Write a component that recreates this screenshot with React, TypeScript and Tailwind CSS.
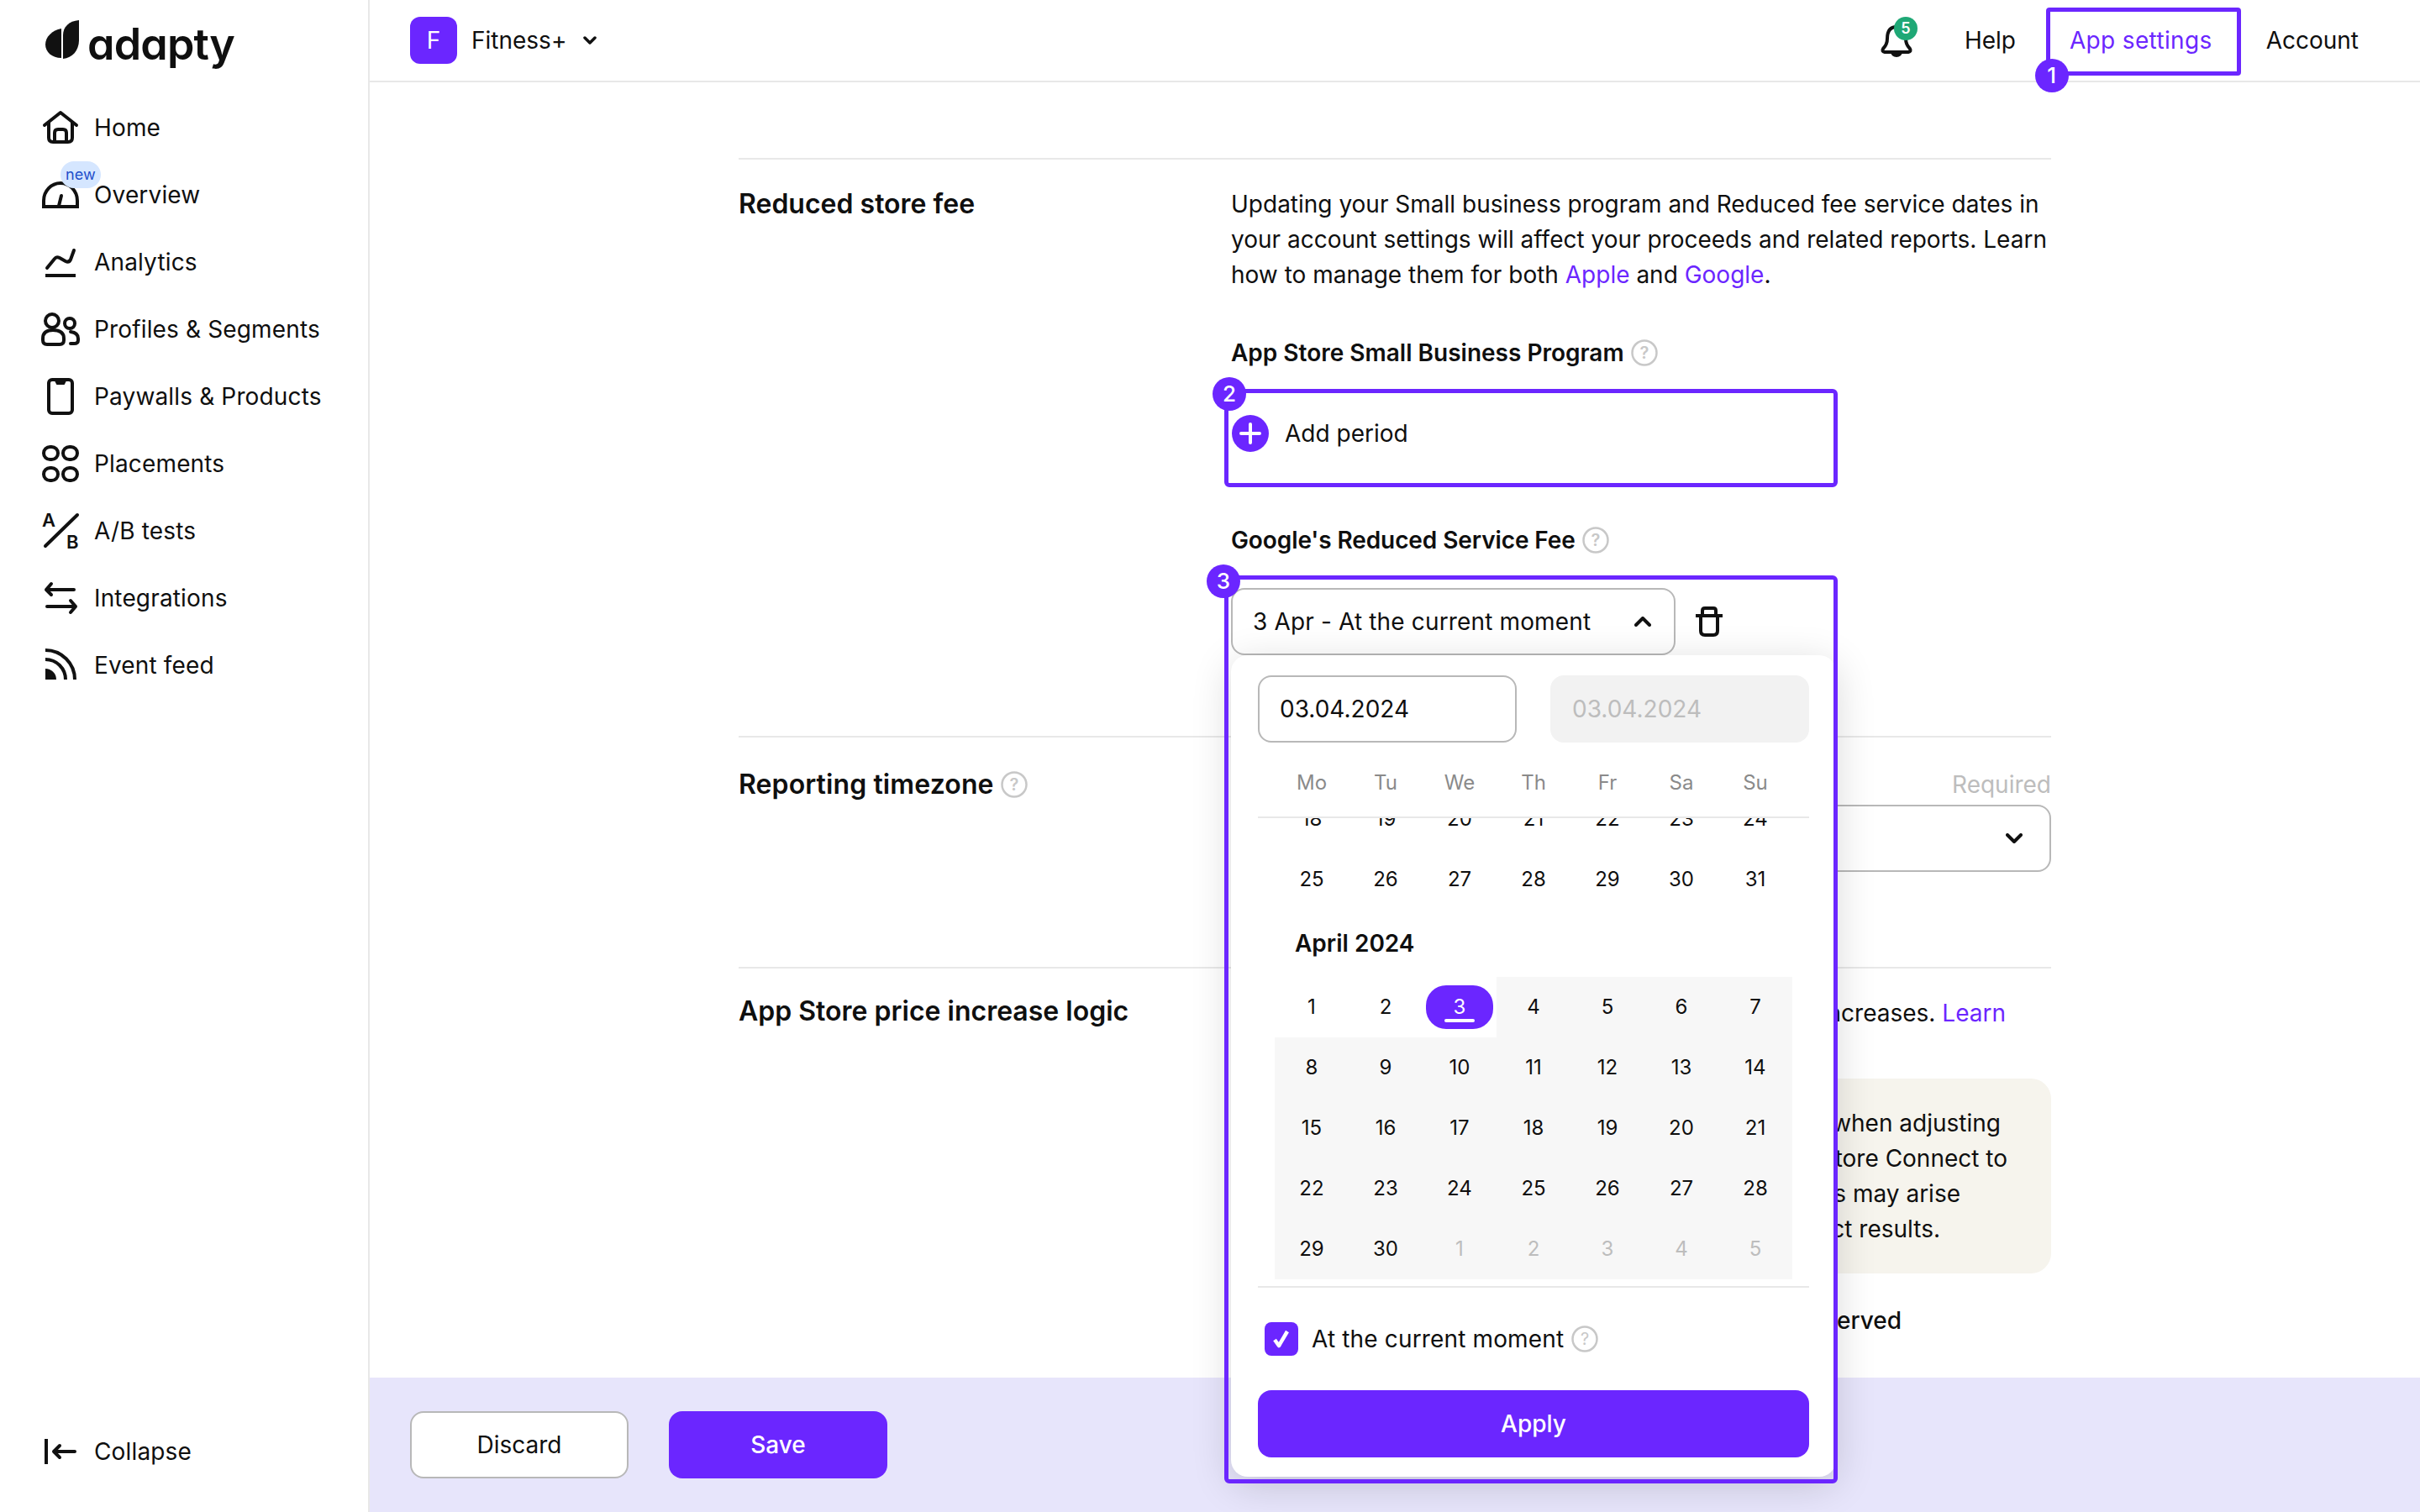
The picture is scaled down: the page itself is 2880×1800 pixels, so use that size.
import React from "react";

function NavIcon({ name }: { name: string }) {
  const c = { fill: "none", stroke: "#111", strokeWidth: 4, strokeLinecap: "round" as const, strokeLinejoin: "round" as const };
  return (
    <svg width="48" height="48" viewBox="0 0 48 48" className="shrink-0">
      {name === "home" && (
        <g {...c}>
          <path d="M5 21 L24 6 L43 21" />
          <path d="M10 18 V36 Q10 41 15 41 H33 Q38 41 38 36 V18" />
          <path d="M17 41 V30 Q17 26 21 26 H27 Q31 26 31 30 V41" />
        </g>
      )}
      {name === "overview" && (
        <g {...c}>
          <path d="M4 38 V31 A20 21 0 0 1 44 31 V38 Z" strokeLinecap="butt" strokeLinejoin="miter" />
          <path d="M22 37 L25 25" />
        </g>
      )}
      {name === "analytics" && (
        <g {...c}>
          <path d="M8 31 L17 20 Q19 17 23 19 L30 23 Q34 25 36 21 L40 10" />
          <path d="M6 40 H42" strokeLinecap="butt" />
        </g>
      )}
      {name === "profiles" && (
        <g {...c}>
          <circle cx="14" cy="14" r="8" />
          <path d="M3 35 Q3 25 15 25 Q28 25 28 35 V37 Q28 42 23 42 H8 Q3 42 3 37 Z" />
          <circle cx="35" cy="17" r="6" />
          <path d="M36 27 Q45 28 45 35 V37 Q45 41 40 41 H36" />
        </g>
      )}
      {name === "paywalls" && (
        <g {...c}>
          <rect x="10" y="4" width="28" height="40" rx="4" />
          <path d="M18 5 L20 9 H28 L30 5" fill="#111" strokeWidth="2" />
        </g>
      )}
      {name === "placements" && (
        <g {...c}>
          <rect x="4" y="4" width="17" height="15" rx="7.5" />
          <rect x="27" y="4" width="17" height="15" rx="7.5" />
          <rect x="4" y="29" width="17" height="15" rx="7.5" />
          <rect x="27" y="29" width="17" height="15" rx="7.5" />
        </g>
      )}
      {name === "ab" && (
        <g>
          <path d="M44 5 L6 42" {...c} />
          <text x="2" y="19" fontSize="22" fontWeight="600" fill="#111" fontFamily="Inter, sans-serif">A</text>
          <text x="31" y="45" fontSize="22" fontWeight="600" fill="#111" fontFamily="Inter, sans-serif">B</text>
        </g>
      )}
      {name === "integrations" && (
        <g {...c}>
          <path d="M7 14 H40 M13 7 L7 14 L13 20" />
          <path d="M8 34 H42 M36 27 L42 34 L36 41" />
        </g>
      )}
      {name === "feed" && (
        <g>
          <path d="M6 28 A13 13 0 0 1 19 41 H6 Z" fill="#111" />
          <path d="M6 17 A24 24 0 0 1 30 41 M6 6 A35 35 0 0 1 41 41" {...c} strokeLinecap="butt" />
        </g>
      )}
      {name === "collapse" && (
        <g {...c}>
          <path d="M7 9 V39" strokeLinecap="butt" />
          <path d="M41 24 H16 M23 17 L16 24 L23 31" />
        </g>
      )}
    </svg>
  );
}

function Help() {
  return (
    <svg width="32" height="32" viewBox="0 0 32 32" className="shrink-0">
      <circle cx="16" cy="16" r="14.5" fill="none" stroke="#c8c8c8" strokeWidth="2.5" />
      <text x="16" y="23" textAnchor="middle" fontSize="20" fill="#c8c8c8" fontFamily="Inter, sans-serif">?</text>
    </svg>
  );
}

function Chevron({ w = 14, up = false, sw = 3.5 }: { w?: number; up?: boolean; sw?: number }) {
  const h = Math.round(w * 0.6);
  return (
    <svg width={w} height={h} viewBox={`0 0 ${w} ${h}`} className="shrink-0">
      <path
        d={up ? `M2 ${h - 2} L${w / 2} 2 L${w - 2} ${h - 2}` : `M2 2 L${w / 2} ${h - 2} L${w - 2} 2`}
        fill="none"
        stroke="#111"
        strokeWidth={sw}
        strokeLinecap="round"
        strokeLinejoin="round"
      />
    </svg>
  );
}

function Badge({ n, className }: { n: number; className: string }) {
  return (
    <div className={`absolute w-10 h-10 rounded-full bg-[#6b26ff] text-white text-[26px] font-medium flex items-center justify-center ${className}`}>
      {n}
    </div>
  );
}

const nav = [
  ["home", "Home"],
  ["overview", "Overview"],
  ["analytics", "Analytics"],
  ["profiles", "Profiles & Segments"],
  ["paywalls", "Paywalls & Products"],
  ["placements", "Placements"],
  ["ab", "A/B tests"],
  ["integrations", "Integrations"],
  ["feed", "Event feed"],
];

const weekdays = ["Mo", "Tu", "We", "Th", "Fr", "Sa", "Su"];
const march = [25, 26, 27, 28, 29, 30, 31];
const marchPrev = [18, 19, 20, 21, 22, 23, 24];
const april = [
  1, 2, 3, 4, 5, 6, 7, 8, 9, 10, 11, 12, 13, 14, 15, 16, 17, 18, 19, 20, 21, 22, 23, 24, 25, 26, 27, 28, 29, 30,
];
const may = [1, 2, 3, 4, 5];

function Calendar() {
  return (
    <div className="absolute left-0 top-[80px] w-[720px] h-[978px] bg-white rounded-[20px] shadow-[0_10px_48px_rgba(0,0,0,0.16)] z-10 px-8 pt-6 flex flex-col">
      <div className="flex gap-10">
        <div className="w-[308px] h-[80px] rounded-2xl border-2 border-[#b8b8b8] flex items-center pl-[24px]">03.04.2024</div>
        <div className="w-[308px] h-[80px] rounded-2xl bg-[#f2f2f2] text-[#bdbdbd] flex items-center pl-[26px]">03.04.2024</div>
      </div>
      <div className="h-[90px] border-b-2 border-[#e8e8e8] px-5 grid grid-cols-7 text-[24px] text-[#8a8a8a] text-center items-center pt-[8px]">
        {weekdays.map((d) => (
          <div key={d}>{d}</div>
        ))}
      </div>
      <div className="h-[558px] overflow-hidden px-5 text-[24px]">
        <div className="grid grid-cols-7 auto-rows-[72px] -mt-[35px] text-center">
          {marchPrev.concat(march).map((d) => (
            <div key={d} className="flex items-center justify-center">{d}</div>
          ))}
        </div>
        <div className="h-[80px] flex items-center pl-6 text-[28px] font-semibold">April 2024</div>
        <div className="grid grid-cols-7 auto-rows-[72px] text-center">
          {april.map((d) => (
            <div key={d} className={`flex items-center justify-center ${d > 3 ? "bg-[#f7f7f7]" : ""}`}>
              {d === 3 ? (
                <div className="relative w-[80px] h-[52px] rounded-[24px] bg-[#6b26ff] text-white flex items-center justify-center">
                  3
                  <div className="absolute left-[22px] bottom-2 w-[36px] h-1 rounded-sm bg-white" />
                </div>
              ) : (
                d
              )}
            </div>
          ))}
          {may.map((d) => (
            <div key={`m${d}`} className="flex items-center justify-center bg-[#f7f7f7] text-[#bdbdbd]">{d}</div>
          ))}
        </div>
      </div>
      <div className="border-t-2 border-[#e8e8e8] h-[124px] flex items-center pl-2 pb-[1px] -mt-[1px]">
        <div className="w-10 h-10 rounded-lg bg-[#6b26ff] flex items-center justify-center">
          <svg width="26" height="26" viewBox="0 0 26 26">
            <path d="M5 14 L10 21 L20 4" fill="none" stroke="#fff" strokeWidth="4.5" strokeLinejoin="round" />
          </svg>
        </div>
        <span className="ml-4 tracking-[0.15px]">At the current moment</span>
        <span className="ml-[9px]"><Help /></span>
      </div>
      <button className="h-[80px] rounded-2xl bg-[#6b26ff] text-white font-medium">Apply</button>
    </div>
  );
}

export default function App() {
  return (
    <div className="flex h-screen w-full overflow-hidden bg-white text-[#0f0f0f] text-[28px] leading-[42px] font-['Inter',sans-serif]">
      <aside className="w-[440px] shrink-0 border-r-2 border-[#e8e8e8] flex flex-col pb-[48px]">
        <div className="h-[112px] pl-[54px] flex items-start pt-[24px] gap-[10px]">
          <svg width="40" height="46" viewBox="0 0 40 46" className="shrink-0">
            <path d="M21 18 C21 8 28 1 40 0 V24 C40 36 32 45 21 46 Z" fill="#111" />
            <path d="M19 10 C8 12 0 20 0 29 C0 38 8 45 19 45 Z" fill="#111" />
          </svg>
          <span className="text-[52px] leading-[54px] font-semibold tracking-[-0.8px] [font-feature-settings:'cv11'] mt-[2px]">adapty</span>
        </div>
        <nav className="flex flex-col">
          {nav.map(([icon, label]) => (
            <div key={label} className="relative h-[80px] pl-12 flex items-center gap-4 tracking-[0.15px]">
              <NavIcon name={icon} />
              <span>{label}</span>
              {icon === "overview" && (
                <span className="absolute left-[72px] top-0 w-12 h-8 rounded-2xl bg-[#d5e6ff] text-[#1f4fcb] text-[18px] leading-[32px] text-center">new</span>
              )}
            </div>
          ))}
        </nav>
        <div className="mt-auto h-12 pl-12 flex items-center gap-4 tracking-[0.15px]">
          <NavIcon name="collapse" />
          <span>Collapse</span>
        </div>
      </aside>

      <div className="flex-1 flex flex-col min-w-0">
        <header className="h-[98px] shrink-0 border-b-2 border-[#e8e8e8] flex items-center pl-12 pr-[73px]">
          <div className="w-14 h-14 rounded-xl bg-[#6b26ff] text-white flex items-center justify-center">F</div>
          <span className="ml-[17px]">Fitness+</span>
          <span className="ml-5"><Chevron w={16} /></span>
          <div className="ml-auto relative w-10 h-11 mr-[61px]">
            <svg width="40" height="44" viewBox="0 0 40 44">
              <path d="M20 6 C12 6 9 12 9 20 C9 26 7 29 4 32 Q2 35 6 36 H34 Q38 35 36 32 C33 29 31 26 31 20 C31 12 28 6 20 6 Z" fill="none" stroke="#111" strokeWidth="4" />
              <path d="M13 36 A7 6 0 0 0 27 36 Z" fill="#111" />
            </svg>
            <div className="absolute left-[17px] -top-[6px] w-7 h-7 rounded-full bg-[#1fa876] text-white text-[18px] font-semibold leading-[28px] text-center">5</div>
          </div>
          <div className="flex gap-16">
            <span>Help</span>
            <span className="relative text-[#6b26ff] tracking-[0.35px]">
              App settings
              <div className="absolute -left-[28px] -right-[34px] -top-[18px] h-[81px] border-[5px] border-[#6b26ff] rounded-[4px]" />
              <Badge n={1} className="-left-[41px] top-[43px]" />
            </span>
            <span>Account</span>
          </div>
        </header>

        <main className="relative flex-1 min-h-0 pl-[439px] pr-[439px] pt-[90px]">
          <section className="relative h-[688px] border-t-2 border-[#e8e8e8] flex">
            <h2 className="w-[586px] shrink-0 text-[32px] font-semibold pt-[32px]">Reduced store fee</h2>
            <div className="flex-1 pt-[32px]">
              <p className="w-[974px]">
                Updating your Small business program and Reduced fee service dates in your account settings will affect your proceeds and related reports. Learn how to manage them for both{" "}
                <span className="text-[#6b26ff]">Apple</span> and <span className="text-[#6b26ff]">Google</span>.
              </p>
              <div className="mt-[51px] flex items-center gap-[8px] font-semibold">
                App Store Small Business Program <Help />
              </div>
              <div className="relative mt-[54px] flex items-center h-[42px]">
                <div className="absolute -left-2 -top-[32px] w-[730px] h-[117px] border-[5px] border-[#6b26ff] rounded-[6px]" />
                <Badge n={2} className="-left-[22px] -top-[46px]" />
                <div className="w-11 h-11 ml-[1px] rounded-full bg-[#6b26ff] flex items-center justify-center">
                  <svg width="28" height="28" viewBox="0 0 28 28">
                    <path d="M14 3 V25 M3 14 H25" stroke="#fff" strokeWidth="4" strokeLinecap="round" />
                  </svg>
                </div>
                <span className="ml-[19px]">Add period</span>
              </div>
              <div className="mt-[85px] flex items-center gap-[8px] font-semibold tracking-[-0.1px]">
                Google's Reduced Service Fee <Help />
              </div>
              <div className="relative mt-[36px] flex items-center">
                <div className="w-[529px] h-[80px] rounded-2xl border-2 border-[#b8b8b8] flex items-center justify-between pl-[24px] pr-[27px]">
                  <span className="tracking-[0.15px]">3 Apr - At the current moment</span>
                  <Chevron w={20} up sw={4} />
                </div>
                <svg width="36" height="40" viewBox="0 0 36 40" className="ml-[22px]">
                  <g fill="none" stroke="#111" strokeWidth="4">
                    <path d="M2 13 H34" />
                    <path d="M8 13 V31 Q8 36 13 36 H23 Q28 36 28 31 V13" />
                    <path d="M10 13 V7 Q10 4 13 4 H23 Q26 4 26 7 V13" />
                  </g>
                </svg>
                <Calendar />
                <div className="absolute -left-2 -top-[15px] w-[730px] h-[1081px] border-[5px] border-[#6b26ff] rounded-[6px] z-20 pointer-events-none" />
                <Badge n={3} className="-left-[29px] -top-[28px] z-20" />
              </div>
            </div>
          </section>

          <section className="h-[275px] border-t-2 border-[#e8e8e8] flex">
            <h2 className="w-[586px] shrink-0 pt-[35px] text-[32px] font-semibold tracking-[0.1px] flex items-start gap-2">
              Reporting timezone
              <span className="mt-[5px]"><Help /></span>
            </h2>
            <div className="flex-1 pt-[35px]">
              <div className="text-right text-[#bdbdbd]">Required</div>
              <div className="mt-[3px] h-[80px] rounded-2xl border-2 border-[#b8b8b8] flex items-center justify-end pr-[32px]">
                <Chevron w={20} sw={4} />
              </div>
            </div>
          </section>

          <section className="border-t-2 border-[#e8e8e8] flex">
            <h2 className="w-[586px] shrink-0 pt-[30px] text-[32px] font-semibold">App Store price increase logic</h2>
            <div className="flex-1 pt-[32px]">
              <p className="text-right pr-[54px]">
                Choose what happens to App Store price increases. <span className="text-[#6b26ff]">Learn</span>
              </p>
              <div className="mt-[57px] h-[232px] rounded-3xl bg-[#f6f4ed] pt-[32px]">
                <p className="text-right pr-[60px]">Be careful with the settings when adjusting</p>
                <p className="text-right pr-[52px]">prices directly in App Store Connect to</p>
                <p className="text-right pr-[108px]">avoid errors, discrepancies may arise</p>
                <p className="text-right pr-[132px]">and lead to incorrect results.</p>
              </div>
              <p className="mt-[35px] text-right pr-[178px] font-medium">Price is preserved</p>
            </div>
          </section>

          <div className="absolute left-0 right-0 top-[1542px] h-[160px] bg-[#e7e5fb] flex items-center gap-[48px] pl-12">
            <button className="w-[260px] h-[80px] rounded-2xl border-2 border-[#b8b8b8] bg-white">Discard</button>
            <button className="w-[260px] h-[80px] rounded-2xl bg-[#6b26ff] text-white font-medium">Save</button>
          </div>
        </main>
      </div>
    </div>
  );
}
